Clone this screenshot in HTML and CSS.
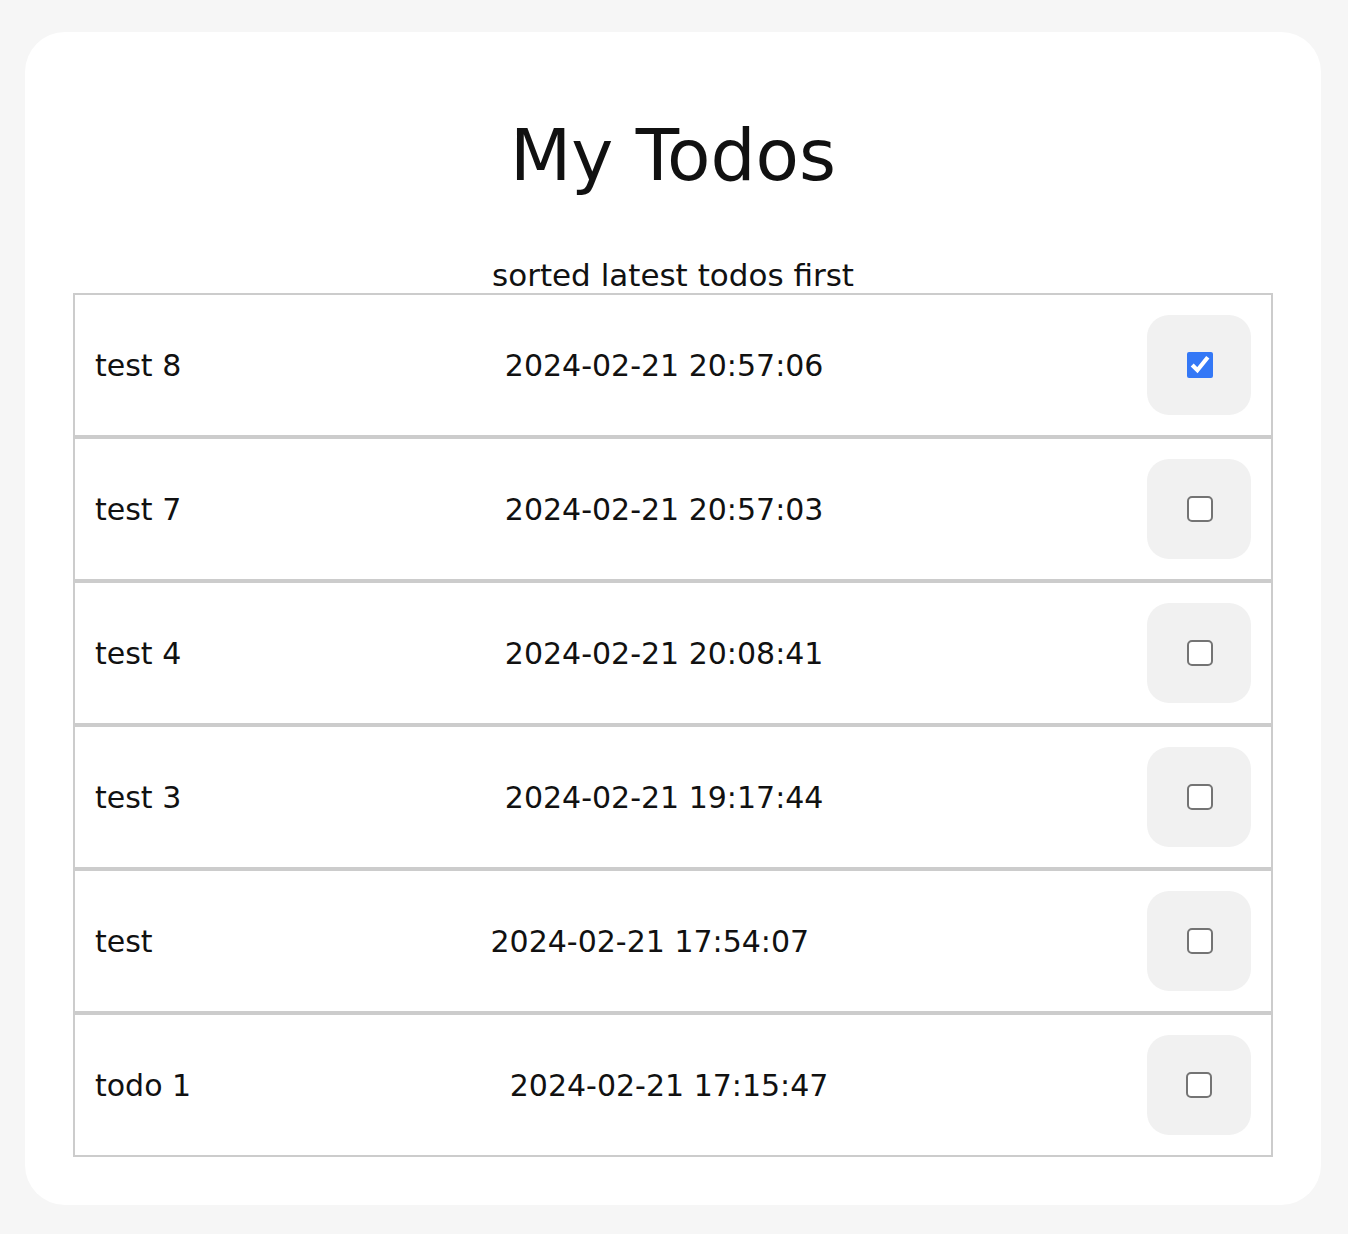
FILE: index.html
```html
<!DOCTYPE html>
<html lang="en">
<head>
<meta charset="utf-8">
<title>My Todos</title>
<link rel="stylesheet" href="styles.css">
</head>
<body>
<main class="card">
  <h1 class="title">My Todos</h1>
  <p class="subtitle">sorted latest todos first</p>
  <ul class="list">
    <li class="row"><span class="name">test 8</span><span class="date">2024-02-21 20:57:06</span><label class="toggle"><input type="checkbox" class="check" checked></label></li>
    <li class="row"><span class="name">test 7</span><span class="date">2024-02-21 20:57:03</span><label class="toggle"><input type="checkbox" class="check"></label></li>
    <li class="row"><span class="name">test 4</span><span class="date">2024-02-21 20:08:41</span><label class="toggle"><input type="checkbox" class="check"></label></li>
    <li class="row"><span class="name">test 3</span><span class="date">2024-02-21 19:17:44</span><label class="toggle"><input type="checkbox" class="check"></label></li>
    <li class="row"><span class="name">test</span><span class="date">2024-02-21 17:54:07</span><label class="toggle"><input type="checkbox" class="check"></label></li>
    <li class="row"><span class="name">todo 1</span><span class="date">2024-02-21 17:15:47</span><label class="toggle"><input type="checkbox" class="check"></label></li>
  </ul>
</main>
</body>
</html>
```
FILE: styles.css
```css
html, body {
  margin: 0;
  padding: 0;
}
body {
  background: #f6f6f6;
  font-family: "DejaVu Sans", "Noto Sans", sans-serif;
  color: #111;
  padding: 32px 27px 30px 25px;
}
.card {
  background: #fff;
  border-radius: 40px;
  padding: 48px;
  display: flex;
  flex-direction: column;
}
.title {
  margin: 0;
  text-align: center;
  font-weight: 400;
  font-size: 71px;
  line-height: 100px;
  margin-top: 26px;
}
.subtitle {
  margin: 0;
  margin-top: 52px;
  text-align: center;
  font-size: 31px;
  line-height: 35px;
}
.list {
  list-style: none;
  margin: 0;
  padding: 0;
  border: 2px solid #cccccc;
  border-top: none;
  border-bottom: none;
}
.row {
  display: flex;
  align-items: center;
  justify-content: space-between;
  padding: 20px;
  border-top: 2px solid #cccccc;
  border-bottom: 2px solid #cccccc;
  font-size: 30px;
}
.toggle {
  width: 104px;
  height: 100px;
  border-radius: 22px;
  background: #f1f1f1;
  display: flex;
  align-items: center;
  justify-content: center;
}
.check {
  width: 26px;
  height: 26px;
  margin: 0 0 0 1px;
  accent-color: #3478f6;
}
.check:not(:checked) {
  appearance: none;
  -webkit-appearance: none;
  box-sizing: border-box;
  border: 2px solid #747474;
  border-radius: 5px;
  background: #fff;
}
```
